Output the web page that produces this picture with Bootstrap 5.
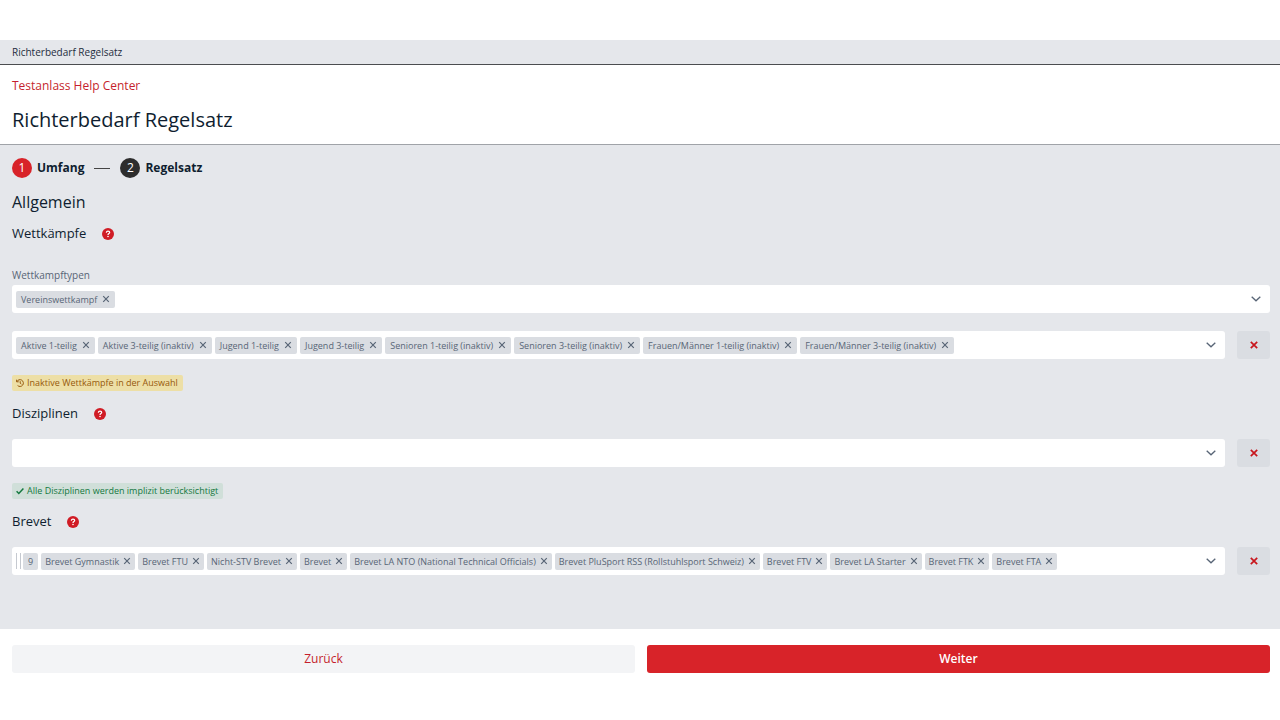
<!DOCTYPE html>
<html lang="de">
<head>
<meta charset="utf-8">
<meta name="viewport" content="width=device-width, initial-scale=1">
<title>Richterbedarf Regelsatz</title>
<link rel="stylesheet" href="https://cdn.jsdelivr.net/npm/bootstrap@5.3.0/dist/css/bootstrap.min.css">
<style>
  :root { --brand: #d82329; --brand-text: #c51f2d; --ink: #0f1e30; --panel: #e5e7eb; --tag: #dadde2; --slate: #586576; }
  body { font-family: "Open Sans", "Noto Sans", sans-serif; font-size: 12px; line-height: 16px; color: var(--ink); background: #fff; padding-top: 40px; }
  .gutter { padding-left: 12px; padding-right: 10px; }
  .crumb-bar { background: var(--panel); border-bottom: 1px solid #4b4d50; font-size: 10px; padding-top: 4px; padding-bottom: 4px; color: #1f2d3d; }
  .page-head { padding-top: 13px; padding-bottom: 9px; border-bottom: 1px solid #a0a3a8; }
  .page-head a { color: var(--brand-text); }
  .page-head h1 { font-size: 20px; line-height: 30px; font-weight: 400; margin: 11px 0 0; }
  .panel { background: var(--panel); padding-top: 13px; padding-bottom: 54px; }
  .step-list { gap: 10px; }
  .step-list li { gap: 5px; }
  .step-no { width: 20px; height: 20px; color: #fff; background: #2d2d2d; }
  .step-no.current { background: var(--brand); }
  .step-line { width: 16px; height: 1px; background: #444; }
  .panel h2 { font-size: 16px; line-height: 24px; font-weight: 400; margin: 12px 0 9px; }
  .section-title { height: 20px; gap: 16px; }
  section + section .section-title { margin-top: 12px; }
  .section-title h3 { font-size: 13px; line-height: 20px; font-weight: 400; margin: 0; }
  .help-btn { width: 12px; height: 12px; line-height: 0; margin-top: 2px; }
  .field-label { font-size: 10px; line-height: 16px; color: var(--slate); margin: 24px 0 2px; }
  .picker { background: #fff; border-radius: 3px; height: 28px; min-width: 0; padding: 0 9px 0 4px; gap: 3px; }
  .picker input { min-width: 0; width: 0; height: 20px; }
  .chip { background: var(--tag); color: var(--slate); border-radius: 2px; height: 17px; font-size: 9px; line-height: 17px; padding: 0 5px; gap: 5px; white-space: nowrap; }
  .picker-dense .chip { padding: 0 4px; gap: 4px; }
  .grip { width: 5px; height: 16px; border-left: 1px solid #c5c9d0; border-right: 1px solid #c5c9d0; }
  .count { gap: 2px; }
  .picker-dense .count .chip { padding: 0 5px; }
  .chip button, .arrow-btn { line-height: 0; color: var(--slate); }
  .picker-row { gap: 12px; }
  .field-label ~ .picker-row { margin-top: 18px; }
  .clear-btn { width: 33px; height: 28px; background: var(--tag); border-radius: 3px; }
  .note { font-size: 9px; line-height: 16px; border-radius: 2px; padding: 0 5px 0 4px; gap: 3px; margin-top: 16px; }
  .note-warn { background: #eddfa6; color: #96590c; }
  .note-ok { background: #d0dfd9; color: #14783f; }
  .page-foot { gap: 12px; padding-top: 16px; padding-bottom: 16px; }
  .page-foot .btn { --bs-btn-border-width: 0px; border-radius: 3px; font-size: 12px; line-height: 16px; padding: 6px 12px; }
  .btn-back { background: #f3f4f6; color: var(--brand-text); }
  .btn-next { background: var(--brand); color: #fff; font-weight: 600; }
</style>
</head>
<body>
<svg class="d-none" aria-hidden="true">
  <symbol id="x" viewBox="0 0 8 8"><path d="M1.2 1.2l5.6 5.6M6.8 1.2L1.2 6.8" fill="none" stroke="currentColor" stroke-width="1.2"/></symbol>
  <symbol id="xb" viewBox="0 0 8 8"><path d="M.8.8l6.400 6.400M7.200.8L.8 7.200" fill="none" stroke="#c8161d" stroke-width="1.7"/></symbol>
  <symbol id="down" viewBox="0 0 10 6"><path d="M.7.7L5 4.8 9.300.7" fill="none" stroke="currentColor" stroke-width="1.3"/></symbol>
  <symbol id="help" viewBox="0 0 12 12"><circle cx="6" cy="6" r="6" fill="#d01c25"/><path d="M4.300 4.700C4.400 3.600 5.100 3.200 6 3.200s1.700.5 1.700 1.300C7.700 5.600 6 5.500 6 6.900" fill="none" stroke="#fff" stroke-width="1.200"/><circle cx="6" cy="8.500" r=".8" fill="#fff"/></symbol>
</svg>

<nav class="crumb-bar gutter" aria-label="Pfad">Richterbedarf Regelsatz</nav>

<header class="page-head gutter">
  <a href="#" class="d-table text-decoration-none">Testanlass Help Center</a>
  <h1>Richterbedarf Regelsatz</h1>
</header>

<main class="panel gutter">
  <ol class="step-list list-unstyled d-flex align-items-center m-0 fw-bold">
    <li class="d-flex align-items-center"><span class="step-no current rounded-circle d-flex align-items-center justify-content-center fw-normal">1</span>Umfang</li>
    <li class="d-flex align-items-center" aria-hidden="true"><span class="step-line"></span></li>
    <li class="d-flex align-items-center"><span class="step-no rounded-circle d-flex align-items-center justify-content-center fw-normal">2</span>Regelsatz</li>
  </ol>

  <h2>Allgemein</h2>

  <section>
    <div class="section-title d-flex align-items-center">
      <h3>Wettkämpfe</h3>
      <button type="button" class="help-btn border-0 bg-transparent p-0" aria-label="Hilfe zu Wettkämpfe"><svg width="12" height="12"><use href="#help"/></svg></button>
    </div>
    <label class="field-label d-table" for="typen">Wettkampftypen</label>
    <div class="picker d-flex align-items-center">
      <span class="chip d-flex align-items-center">Vereinswettkampf<button type="button" class="border-0 bg-transparent p-0" aria-label="Entfernen"><svg width="8" height="8"><use href="#x"/></svg></button></span>
      <input id="typen" type="text" class="border-0 bg-transparent flex-grow-1 p-0">
      <button type="button" class="arrow-btn border-0 bg-transparent p-0" aria-label="Öffnen"><svg width="10" height="6"><use href="#down"/></svg></button>
    </div>
    <div class="picker-row d-flex">
      <div class="picker d-flex align-items-center flex-grow-1">
        <span class="chip d-flex align-items-center">Aktive 1-teilig<button type="button" class="border-0 bg-transparent p-0" aria-label="Entfernen"><svg width="8" height="8"><use href="#x"/></svg></button></span>
        <span class="chip d-flex align-items-center">Aktive 3-teilig (inaktiv)<button type="button" class="border-0 bg-transparent p-0" aria-label="Entfernen"><svg width="8" height="8"><use href="#x"/></svg></button></span>
        <span class="chip d-flex align-items-center">Jugend 1-teilig<button type="button" class="border-0 bg-transparent p-0" aria-label="Entfernen"><svg width="8" height="8"><use href="#x"/></svg></button></span>
        <span class="chip d-flex align-items-center">Jugend 3-teilig<button type="button" class="border-0 bg-transparent p-0" aria-label="Entfernen"><svg width="8" height="8"><use href="#x"/></svg></button></span>
        <span class="chip d-flex align-items-center">Senioren 1-teilig (inaktiv)<button type="button" class="border-0 bg-transparent p-0" aria-label="Entfernen"><svg width="8" height="8"><use href="#x"/></svg></button></span>
        <span class="chip d-flex align-items-center">Senioren 3-teilig (inaktiv)<button type="button" class="border-0 bg-transparent p-0" aria-label="Entfernen"><svg width="8" height="8"><use href="#x"/></svg></button></span>
        <span class="chip d-flex align-items-center">Frauen/Männer 1-teilig (inaktiv)<button type="button" class="border-0 bg-transparent p-0" aria-label="Entfernen"><svg width="8" height="8"><use href="#x"/></svg></button></span>
        <span class="chip d-flex align-items-center">Frauen/Männer 3-teilig (inaktiv)<button type="button" class="border-0 bg-transparent p-0" aria-label="Entfernen"><svg width="8" height="8"><use href="#x"/></svg></button></span>
        <input type="text" class="border-0 bg-transparent flex-grow-1 p-0" aria-label="Wettkämpfe">
        <button type="button" class="arrow-btn border-0 bg-transparent p-0" aria-label="Öffnen"><svg width="10" height="6"><use href="#down"/></svg></button>
      </div>
      <button type="button" class="clear-btn border-0 p-0 d-flex align-items-center justify-content-center flex-shrink-0" aria-label="Wettkämpfe leeren"><svg width="8" height="8"><use href="#xb"/></svg></button>
    </div>
    <div class="d-flex"><span class="note note-warn d-flex align-items-center"><svg width="8" height="8" viewBox="0 0 8 8" fill="none" stroke="currentColor"><path d="M.6.7v2.100h2.100M.9 2.600A3.400 3.400 0 1 1 1.600 6.500M4.200 2.200v2l1.200.9"/></svg>Inaktive Wettkämpfe in der Auswahl</span></div>
  </section>

  <section>
    <div class="section-title d-flex align-items-center">
      <h3>Disziplinen</h3>
      <button type="button" class="help-btn border-0 bg-transparent p-0" aria-label="Hilfe zu Disziplinen"><svg width="12" height="12"><use href="#help"/></svg></button>
    </div>
    <div class="picker-row d-flex mt-3">
      <div class="picker d-flex align-items-center flex-grow-1">
        <input type="text" class="border-0 bg-transparent flex-grow-1 p-0" aria-label="Disziplinen">
        <button type="button" class="arrow-btn border-0 bg-transparent p-0" aria-label="Öffnen"><svg width="10" height="6"><use href="#down"/></svg></button>
      </div>
      <button type="button" class="clear-btn border-0 p-0 d-flex align-items-center justify-content-center flex-shrink-0" aria-label="Disziplinen leeren"><svg width="8" height="8"><use href="#xb"/></svg></button>
    </div>
    <div class="d-flex"><span class="note note-ok d-flex align-items-center"><svg width="8" height="8" viewBox="0 0 8 8" fill="none" stroke="currentColor" stroke-width="1.500"><path d="M.6 4.300l2.200 2.200L7.400 1.500"/></svg>Alle Disziplinen werden implizit berücksichtigt</span></div>
  </section>

  <section>
    <div class="section-title d-flex align-items-center">
      <h3>Brevet</h3>
      <button type="button" class="help-btn border-0 bg-transparent p-0" aria-label="Hilfe zu Brevet"><svg width="12" height="12"><use href="#help"/></svg></button>
    </div>
    <div class="picker-row d-flex mt-3">
      <div class="picker picker-dense d-flex align-items-center flex-grow-1">
        <span class="count d-flex align-items-center"><span class="grip"></span><span class="chip">9</span></span>
        <span class="chip d-flex align-items-center">Brevet Gymnastik<button type="button" class="border-0 bg-transparent p-0" aria-label="Entfernen"><svg width="8" height="8"><use href="#x"/></svg></button></span>
        <span class="chip d-flex align-items-center">Brevet FTU<button type="button" class="border-0 bg-transparent p-0" aria-label="Entfernen"><svg width="8" height="8"><use href="#x"/></svg></button></span>
        <span class="chip d-flex align-items-center">Nicht-STV Brevet<button type="button" class="border-0 bg-transparent p-0" aria-label="Entfernen"><svg width="8" height="8"><use href="#x"/></svg></button></span>
        <span class="chip d-flex align-items-center">Brevet<button type="button" class="border-0 bg-transparent p-0" aria-label="Entfernen"><svg width="8" height="8"><use href="#x"/></svg></button></span>
        <span class="chip d-flex align-items-center">Brevet LA NTO (National Technical Officials)<button type="button" class="border-0 bg-transparent p-0" aria-label="Entfernen"><svg width="8" height="8"><use href="#x"/></svg></button></span>
        <span class="chip d-flex align-items-center">Brevet PluSport RSS (Rollstuhlsport Schweiz)<button type="button" class="border-0 bg-transparent p-0" aria-label="Entfernen"><svg width="8" height="8"><use href="#x"/></svg></button></span>
        <span class="chip d-flex align-items-center">Brevet FTV<button type="button" class="border-0 bg-transparent p-0" aria-label="Entfernen"><svg width="8" height="8"><use href="#x"/></svg></button></span>
        <span class="chip d-flex align-items-center">Brevet LA Starter<button type="button" class="border-0 bg-transparent p-0" aria-label="Entfernen"><svg width="8" height="8"><use href="#x"/></svg></button></span>
        <span class="chip d-flex align-items-center">Brevet FTK<button type="button" class="border-0 bg-transparent p-0" aria-label="Entfernen"><svg width="8" height="8"><use href="#x"/></svg></button></span>
        <span class="chip d-flex align-items-center">Brevet FTA<button type="button" class="border-0 bg-transparent p-0" aria-label="Entfernen"><svg width="8" height="8"><use href="#x"/></svg></button></span>
        <input type="text" class="border-0 bg-transparent flex-grow-1 p-0" aria-label="Brevet">
        <button type="button" class="arrow-btn border-0 bg-transparent p-0" aria-label="Öffnen"><svg width="10" height="6"><use href="#down"/></svg></button>
      </div>
      <button type="button" class="clear-btn border-0 p-0 d-flex align-items-center justify-content-center flex-shrink-0" aria-label="Brevet leeren"><svg width="8" height="8"><use href="#xb"/></svg></button>
    </div>
  </section>
</main>

<footer class="page-foot gutter d-flex">
  <button type="button" class="btn btn-back w-100">Zurück</button>
  <button type="button" class="btn btn-next w-100">Weiter</button>
</footer>
<script src="https://cdn.jsdelivr.net/npm/bootstrap@5.3.0/dist/js/bootstrap.bundle.min.js"></script>
</body>
</html>
